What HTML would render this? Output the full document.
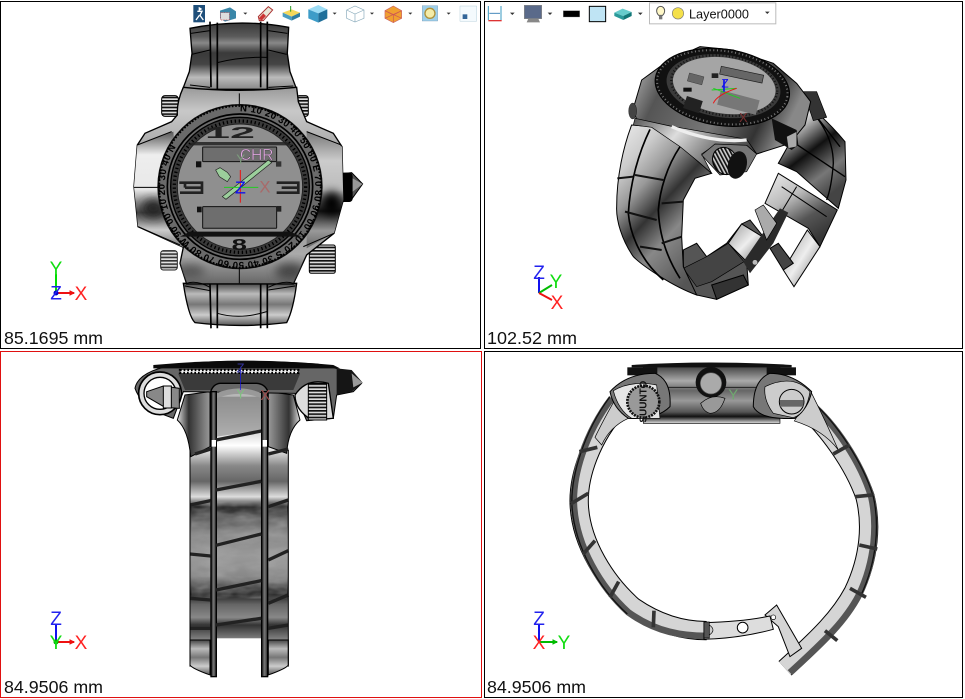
<!DOCTYPE html>
<html><head><meta charset="utf-8"><style>
html,body{margin:0;padding:0;background:#fff;width:965px;height:699px;overflow:hidden}
svg{display:block}
text{font-family:"Liberation Sans",sans-serif}
</style></head><body>
<svg width="965" height="699" viewBox="0 0 965 699" xmlns="http://www.w3.org/2000/svg">
<defs>
<clipPath id="caseClip"><path d="M160,262 Q140,305 142,345 L125,365 L45,400 L22,435 L12,560 L24,680 L160,742 L150,790 L170,852 L490,852 L530,765 L612,700 L640,600 L636,440 L610,400 L530,365 L505,305 L500,262 Q330,280 160,262 Z"/></clipPath>
<linearGradient id="topBand" x1="0" x2="0" y1="0" y2="1"><stop offset="0" stop-color="#3a3a3a"/><stop offset=".2" stop-color="#5a5a5a"/><stop offset=".3" stop-color="#888"/><stop offset=".45" stop-color="#3a3a3a"/><stop offset=".62" stop-color="#444"/><stop offset=".82" stop-color="#bbb"/><stop offset="1" stop-color="#888"/></linearGradient>
<linearGradient id="botBand" x1="0" x2="0" y1="0" y2="1"><stop offset="0" stop-color="#444"/><stop offset=".25" stop-color="#bbb"/><stop offset=".5" stop-color="#777"/><stop offset=".75" stop-color="#ccc"/><stop offset="1" stop-color="#555"/></linearGradient>
<linearGradient id="caseV" x1="0" x2="0" y1="0" y2="1"><stop offset="0" stop-color="#999"/><stop offset=".12" stop-color="#c8c8c8"/><stop offset=".5" stop-color="#888"/><stop offset=".85" stop-color="#aaa"/><stop offset="1" stop-color="#666"/></linearGradient>
<linearGradient id="sideL" x1="0" x2="0" y1="0" y2="1"><stop offset="0" stop-color="#555"/><stop offset=".2" stop-color="#eee"/><stop offset=".5" stop-color="#e8e8e8"/><stop offset=".7" stop-color="#444"/><stop offset=".85" stop-color="#ccc"/><stop offset="1" stop-color="#777"/></linearGradient>
<linearGradient id="sideR" x1="0" x2="0" y1="0" y2="1"><stop offset="0" stop-color="#777"/><stop offset=".25" stop-color="#ccc"/><stop offset=".5" stop-color="#bbb"/><stop offset=".68" stop-color="#111"/><stop offset=".85" stop-color="#999"/><stop offset="1" stop-color="#666"/></linearGradient>
<linearGradient id="v3" x1="0" x2="0" y1="0" y2="1">
<stop offset="0" stop-color="#777"/><stop offset=".08" stop-color="#aaa"/><stop offset=".19" stop-color="#fff"/><stop offset=".27" stop-color="#888"/><stop offset=".33" stop-color="#666"/><stop offset=".39" stop-color="#ddd"/><stop offset=".43" stop-color="#222"/><stop offset=".47" stop-color="#555"/><stop offset=".54" stop-color="#888"/><stop offset=".62" stop-color="#999"/><stop offset=".7" stop-color="#888"/><stop offset=".77" stop-color="#222"/><stop offset=".81" stop-color="#666"/><stop offset=".86" stop-color="#888"/><stop offset=".89" stop-color="#333"/><stop offset=".95" stop-color="#888"/><stop offset="1" stop-color="#ccc"/></linearGradient>
<linearGradient id="rail" x1="0" x2="1" y1="0" y2="0"><stop offset="0" stop-color="#222"/><stop offset=".5" stop-color="#777"/><stop offset="1" stop-color="#222"/></linearGradient>
<linearGradient id="flareL" x1="0" x2="1" y1="0" y2="0"><stop offset="0" stop-color="#ddd"/><stop offset=".35" stop-color="#333"/><stop offset="1" stop-color="#999"/></linearGradient>
<linearGradient id="flareR" x1="1" x2="0" y1="0" y2="0"><stop offset="0" stop-color="#ddd"/><stop offset=".35" stop-color="#333"/><stop offset="1" stop-color="#999"/></linearGradient>
<linearGradient id="head4" x1="0" x2="0" y1="0" y2="1"><stop offset="0" stop-color="#444"/><stop offset=".25" stop-color="#aaa"/><stop offset=".42" stop-color="#666"/><stop offset=".6" stop-color="#999"/><stop offset=".8" stop-color="#555"/><stop offset=".88" stop-color="#111"/><stop offset="1" stop-color="#ddd"/></linearGradient>
<linearGradient id="b2a" x1="0" x2="1" y1="0" y2=".3"><stop offset="0" stop-color="#ccc"/><stop offset=".25" stop-color="#555"/><stop offset=".6" stop-color="#777"/><stop offset=".85" stop-color="#333"/><stop offset="1" stop-color="#888"/></linearGradient>
<linearGradient id="lug2" x1="0" x2="1" y1="0" y2=".4"><stop offset="0" stop-color="#555"/><stop offset=".4" stop-color="#ddd"/><stop offset=".7" stop-color="#888"/><stop offset="1" stop-color="#444"/></linearGradient>
<linearGradient id="b2b" x1="0" x2=".6" y1="0" y2="1"><stop offset="0" stop-color="#eee"/><stop offset=".22" stop-color="#ccc"/><stop offset=".38" stop-color="#999"/><stop offset=".55" stop-color="#333"/><stop offset=".72" stop-color="#888"/><stop offset="1" stop-color="#555"/></linearGradient>
<linearGradient id="b2d" x1="0" x2=".5" y1="0" y2="1"><stop offset="0" stop-color="#555"/><stop offset=".25" stop-color="#ddd"/><stop offset=".55" stop-color="#111"/><stop offset=".8" stop-color="#777"/><stop offset="1" stop-color="#444"/></linearGradient>
<linearGradient id="b2e" x1="0" x2=".6" y1="0" y2="1"><stop offset="0" stop-color="#eee"/><stop offset=".4" stop-color="#bbb"/><stop offset=".7" stop-color="#555"/><stop offset="1" stop-color="#333"/></linearGradient>
<linearGradient id="b2f" x1="0" x2="1" y1="0" y2="1"><stop offset="0" stop-color="#999"/><stop offset=".5" stop-color="#eee"/><stop offset="1" stop-color="#666"/></linearGradient>
<pattern id="knurl" width="10" height="10" patternUnits="userSpaceOnUse"><rect width="10" height="10" fill="#ddd"/><rect width="10" height="5" fill="#111"/></pattern>
<pattern id="knurlV" width="10" height="10" patternUnits="userSpaceOnUse"><rect width="10" height="10" fill="#ccc"/><rect width="5" height="10" fill="#111"/></pattern>
<filter id="marble" x="0" y="0" width="100%" height="100%"><feTurbulence type="fractalNoise" baseFrequency=".012 .03" numOctaves="3" seed="4"/><feColorMatrix values="0 0 0 0 .4  0 0 0 0 .4  0 0 0 0 .4  1.6 0 0 0 -.5"/></filter>
<filter id="bl" x="-50%" y="-50%" width="200%" height="200%"><feGaussianBlur stdDeviation="14"/></filter>
<path id="bz" d="M330,334 a226,226 0 1 1 -.1,0"/>
</defs>

<rect width="965" height="699" fill="#fff"/>

<!-- VIEW 1 : FRONT -->
<g transform="translate(130,0) scale(.3333)">
 <rect x="95" y="287" width="50" height="62" rx="10" fill="url(#knurl)" stroke="#000" stroke-width="3"/>
 <rect x="500" y="287" width="35" height="62" rx="8" fill="url(#knurl)" stroke="#000" stroke-width="3"/>
 <rect x="92" y="752" width="50" height="58" rx="8" fill="url(#knurl)" stroke="#000" stroke-width="3" opacity=".85"/>
 <rect x="538" y="735" width="78" height="85" rx="6" fill="url(#knurl)" stroke="#000" stroke-width="3"/>
 <path d="M572,560 L625,522 L665,518 L698,552 L665,598 L625,605 Z" fill="#555" stroke="#000" stroke-width="3"/>
 <rect x="622" y="518" width="46" height="88" rx="10" fill="#000"/>
 <path d="M668,535 L698,552 L668,575 Z" fill="#999"/>
 <path d="M575,560 L622,535 L622,585 Z" fill="#bbb" stroke="#000" stroke-width="2"/>
 <path d="M180,85 Q330,55 476,82 L472,160 L480,215 L500,268 L158,268 L178,215 L186,160 Z" fill="url(#topBand)" stroke="#000" stroke-width="4"/>
 <path d="M262,68 L262,268 M412,65 L412,268 M240,65 L243,262 M392,65 L392,262" stroke="#000" stroke-width="5" fill="none"/>
 <path d="M183,100 L240,92 M415,92 L472,100 M185,163 L240,150 M415,150 L470,163 M262,188 Q330,170 410,172 M180,255 L240,262 M415,262 L490,258" stroke="#000" stroke-width="3" fill="none"/>
 <path d="M160,850 Q175,950 195,968 Q330,985 470,968 Q490,930 500,850 Z" fill="url(#botBand)" stroke="#000" stroke-width="4"/>
 <path d="M262,850 L262,985 M412,850 L412,985 M240,852 L243,985 M392,850 L392,985" stroke="#000" stroke-width="5" fill="none"/>
 <path d="M165,858 L240,872 M415,870 L495,858 M262,940 Q330,960 410,935" stroke="#000" stroke-width="3" fill="none"/>
 <path d="M160,262 Q140,305 142,345 L125,365 L45,400 L22,435 L12,560 L24,680 L160,742 L150,790 L170,852 L490,852 L530,765 L612,700 L640,600 L636,440 L610,400 L530,365 L505,305 L500,262 Q330,280 160,262 Z" fill="url(#caseV)" stroke="#000" stroke-width="4"/>
 <path d="M22,435 L12,560 L24,680 L160,742 L130,395 Z" fill="url(#sideL)"/>
 <path d="M636,440 L640,600 L612,700 L530,745 L530,395 Z" fill="url(#sideR)"/>
 <g clip-path="url(#caseClip)">
  <ellipse cx="70" cy="625" rx="35" ry="28" fill="#222" filter="url(#bl)"/>
  <ellipse cx="605" cy="610" rx="30" ry="35" fill="#000" filter="url(#bl)"/>
  <ellipse cx="180" cy="815" rx="45" ry="20" fill="#555" filter="url(#bl)"/>
  <ellipse cx="480" cy="815" rx="45" ry="25" fill="#444" filter="url(#bl)"/>
 </g>
 <path d="M22,435 L125,395 M530,395 L634,435 M24,680 L150,735 M520,740 L612,700 M328,280 L328,320 M328,800 L328,850 M12,562 L85,562 M170,850 Q200,840 240,862 M415,862 Q460,840 490,850" stroke="#000" stroke-width="3" fill="none"/>
 <circle cx="330" cy="560" r="248" fill="#111"/>
 <circle cx="330" cy="560" r="243" fill="#6a6a6a"/>
 <circle cx="330" cy="560" r="243" fill="none" stroke="#000" stroke-width="7" stroke-dasharray="5 5"/>
 <text font-size="29" font-weight="bold" fill="#000" letter-spacing="1"><textPath href="#bz">N 10 20 30 40 50 60 E 70 80 90 00 10 20 S 30 40 50 60 70 80 W 90 00 10 20 30 40 N</textPath></text>
 <circle cx="330" cy="560" r="218" fill="none" stroke="#000" stroke-width="5"/>
 <circle cx="330" cy="560" r="208" fill="#3a3a3a" stroke="#000" stroke-width="4"/>
 <circle cx="330" cy="560" r="197" fill="none" stroke="#000" stroke-width="10" stroke-dasharray="4 8"/>
 <circle cx="330" cy="560" r="188" fill="#8f8f8f" stroke="#222" stroke-width="3"/>
 <rect x="218" y="441" width="222" height="44" rx="2" fill="#6e6e6e" stroke="#111" stroke-width="3"/>
 <rect x="218" y="620" width="222" height="65" rx="2" fill="#6e6e6e" stroke="#111" stroke-width="3"/>
 <path d="M190,426 L470,426 L490,436 L172,436 Z" fill="#222" opacity=".85"/>
 <path d="M180,695 L480,695 L515,710 L150,710 Z" fill="#111"/>
 <text x="300" y="414" font-size="46" font-weight="bold" fill="#222" text-anchor="middle" textLength="150" lengthAdjust="spacingAndGlyphs">12</text>
 <text x="328" y="750" font-size="46" font-weight="bold" fill="#111" text-anchor="middle" textLength="46" lengthAdjust="spacingAndGlyphs">8</text>
 <path d="M148,548 L216,548 L216,578 L150,578 M216,563 L165,563 M165,548 L165,563" stroke="#222" stroke-width="8" fill="none"/>
 <path d="M440,548 L505,548 L505,578 L440,578 M505,563 L455,563" stroke="#222" stroke-width="8" fill="none"/>
 <rect x="198" y="484" width="16" height="18" fill="#111"/><rect x="438" y="484" width="16" height="16" fill="#333"/>
 <rect x="201" y="620" width="14" height="17" fill="#111"/><rect x="440" y="618" width="14" height="17" fill="#222"/>
 <path d="M277,590 L415,480 L425,488 L288,598 Z" fill="#9ccf9c" stroke="#222" stroke-width="2"/>
 <path d="M257,510 L270,503 L292,517 L302,530 L292,545 L268,530 Z" fill="#9ccf9c" stroke="#222" stroke-width="2"/>
 <text x="380" y="480" font-size="48" fill="#e0a8e0" stroke="#333" stroke-width=".8" text-anchor="middle" textLength="100" lengthAdjust="spacingAndGlyphs">CHR</text>
 <path d="M331,510 V608" stroke="#e11" stroke-width="3"/>
 <path d="M282,562 H385" stroke="#2c2" stroke-width="3"/>
 <text x="332" y="490" font-size="40" fill="#7d9c7d" text-anchor="middle">Y</text>
 <text x="405" y="578" font-size="50" fill="#a86a6a" text-anchor="middle">X</text>
 <text x="331" y="580" font-size="54" fill="#11e" text-anchor="middle">Z</text>
</g>

<!-- VIEW 2 : PERSPECTIVE -->
<g transform="translate(600,30) scale(.3333)">
 <path d="M625,225 Q690,280 735,335 L738,450 L715,535 L590,425 L535,400 L580,320 Z" fill="url(#b2d)" stroke="#000" stroke-width="3"/>
 <path d="M640,250 Q700,320 700,400 Q695,470 680,510 M585,340 L735,440 M650,260 L720,350" stroke="#000" stroke-width="4" fill="none"/>
 <path d="M535,430 L712,540 L660,650 L625,595 L495,520 Z" fill="url(#b2e)" stroke="#000" stroke-width="3"/>
 <path d="M545,470 L680,560 M590,470 L545,545" stroke="#000" stroke-width="3" fill="none"/>
 <path d="M550,720 L622,600 L660,650 L582,770 Z" fill="url(#b2f)" stroke="#000" stroke-width="3"/>
 <path d="M610,185 L650,185 L680,262 L640,272 Z" fill="#333" stroke="#000" stroke-width="2"/>
 <path d="M250,660 L290,640 L320,680 L380,640 L425,582 L450,570 L490,620 L440,695 L445,765 L350,808 L290,795 L250,730 Z" fill="#555" stroke="#000" stroke-width="3"/>
 <path d="M385,640 L425,582 L495,625 L440,695 Z" fill="url(#b2f)" stroke="#000" stroke-width="3"/>
 <path d="M250,715 L320,680 L385,640 L432,695 L335,755 L290,770 Z" fill="#444" stroke="#000" stroke-width="2"/>
 <path d="M335,765 L430,735 L445,765 L350,808 Z" fill="#333" stroke="#000" stroke-width="3"/>
 <path d="M430,695 L540,535 L565,548 L520,640 L450,730 Z" fill="#2a2a2a"/>
 <path d="M465,540 L490,525 L530,580 L500,630 Z" fill="#aaa" stroke="#000" stroke-width="2"/>
 <path d="M510,655 L535,640 L580,700 L550,720 Z" fill="#444" stroke="#000" stroke-width="3"/>
 <circle cx="465" cy="697" r="8" fill="#bbb" stroke="#000"/>
 <path d="M95,285 L155,290 L245,350 L295,395 L335,430 L285,445 L250,510 L245,620 L250,710 L290,795 C220,770 130,710 100,680 C65,630 48,570 50,530 C50,440 70,350 95,285 Z" fill="url(#b2b)" stroke="#000" stroke-width="3"/>
 <path d="M150,298 C115,370 90,460 85,550 C90,610 120,690 190,750 M240,350 C200,410 180,480 175,540 C178,620 205,690 240,745" stroke="#000" stroke-width="5" fill="none"/>
 <path d="M105,435 L190,450 M52,445 L100,440 M75,545 L170,570 M185,520 L250,515 M185,640 L245,620 M120,650 L185,660" stroke="#111" stroke-width="6" fill="none"/>
 <path d="M100,235 L125,150 L200,95 L300,50 L400,60 L520,100 L590,160 L632,215 L615,285 L570,340 L470,372 L440,330 L210,290 L110,270 Z" fill="url(#b2a)" stroke="#000" stroke-width="3"/>
 <ellipse cx="98" cy="243" rx="12" ry="24" fill="#444" stroke="#000"/>
 <path d="M105,265 L210,288 L440,328 L470,372 L440,346 L345,345 L305,372 L335,430 L295,395 L240,350 L155,292 L100,285 Z" fill="url(#lug2)" stroke="#000" stroke-width="2"/>
 <path d="M215,290 Q330,340 440,330" stroke="#eee" stroke-width="10" fill="none"/>
 <g transform="rotate(8 367 172)">
  <ellipse cx="367" cy="172" rx="203" ry="115" fill="#111" stroke="#000" stroke-width="3"/>
  <ellipse cx="367" cy="172" rx="197" ry="109" fill="none" stroke="#777" stroke-width="6" stroke-dasharray="3 8"/>
  <ellipse cx="370" cy="168" rx="172" ry="94" fill="#3a3a3a"/>
  <ellipse cx="372" cy="166" rx="155" ry="84" fill="#a5a5a5"/>
  <ellipse cx="372" cy="166" rx="160" ry="89" fill="none" stroke="#111" stroke-width="7" stroke-dasharray="3 7"/>
 </g>
 <rect x="360" y="122" width="130" height="24" fill="#666" stroke="#222" stroke-width="2" transform="rotate(12 425 134)"/>
 <rect x="265" y="135" width="45" height="25" fill="#666" stroke="#222" transform="rotate(15 290 145)"/>
 <rect x="335" y="130" width="20" height="14" fill="#222"/>
 <rect x="255" y="205" width="50" height="38" fill="#222" transform="rotate(18 280 220)"/>
 <rect x="355" y="195" width="120" height="45" fill="#777" transform="rotate(15 415 218)"/>
 <rect x="250" y="173" width="25" height="12" fill="#111"/>
 <path d="M335,180 L410,175 M340,175 L420,205" stroke="#2c2" stroke-width="3"/>
 <path d="M372,185 V150" stroke="#11e" stroke-width="5"/>
 <path d="M340,220 Q350,195 410,175" stroke="#e11" stroke-width="3" fill="none"/>
 <text x="375" y="172" font-size="36" fill="#11e" text-anchor="middle">Z</text>
 <text x="430" y="276" font-size="38" fill="#7a3030" text-anchor="middle">X</text>
 <path d="M305,375 L345,342 L440,346 L470,372 L440,425 L360,435 Z" fill="#777" stroke="#000" stroke-width="2"/>
 <ellipse cx="375" cy="393" rx="36" ry="42" fill="url(#knurlV)" stroke="#000" stroke-width="3" transform="rotate(-28 375 393)"/>
 <ellipse cx="412" cy="405" rx="28" ry="42" fill="#111" transform="rotate(15 412 405)"/>
 <path d="M515,265 L590,300 L595,345 L575,360 L525,330 Z" fill="#111"/>
 <path d="M560,320 L590,305 L590,350 L565,355 Z" fill="#aaa" stroke="#000"/>
</g>

<!-- VIEW 3 : BOTTOM -->
<g transform="translate(120,350) scale(.3333)">
 <rect x="210" y="140" width="295" height="770" fill="url(#v3)"/>
 <rect x="215" y="455" width="285" height="290" filter="url(#marble)" opacity=".7"/>
 <path d="M210,870 L210,945 Q215,955 270,975 L270,870 Z" fill="url(#botBand)" stroke="#000" stroke-width="3"/>
 <path d="M505,870 L505,945 Q500,955 445,975 L445,870 Z" fill="url(#botBand)" stroke="#000" stroke-width="3"/>
 <rect x="288" y="865" width="136" height="125" fill="#fff"/>
 <path d="M172,210 L195,135 L270,125 L270,290 L212,320 Q205,240 172,210 Z" fill="url(#flareL)" stroke="#000" stroke-width="3"/>
 <path d="M540,210 L520,135 L445,125 L445,290 L500,310 Q505,240 540,210 Z" fill="url(#flareR)" stroke="#000" stroke-width="3"/>
 <path d="M45,115 Q55,60 180,42 Q360,25 590,42 Q700,60 725,100 L700,125 L650,135 L640,205 L560,212 L525,130 L190,125 L160,205 L120,190 Q60,160 45,115 Z" fill="#666" stroke="#000" stroke-width="3"/>
 <path d="M100,45 Q360,20 640,45 L660,55 L100,55 Z" fill="#0a0a0a"/>
 <rect x="180" y="58" width="355" height="13" fill="#eee" stroke="#000" stroke-width="2"/>
 <rect x="180" y="60" width="355" height="9" fill="none" stroke="#000" stroke-width="7" stroke-dasharray="5 6"/>
 <path d="M175,72 L540,72 L520,120 L195,120 Z" fill="#3a3a3a"/>
 <circle cx="120" cy="130" r="64" fill="#ddd" stroke="#000" stroke-width="5"/>
 <circle cx="120" cy="130" r="48" fill="#fff" stroke="#000" stroke-width="4"/>
 <path d="M80,125 L130,108 L178,115 L178,175 L135,172 L80,140 Z" fill="#888" stroke="#000" stroke-width="3"/>
 <rect x="130" y="108" width="24" height="66" fill="#ddd" stroke="#000" stroke-width="3"/>
 <path d="M525,135 Q560,82 625,100 L640,205 L575,210 Q525,180 525,135 Z" fill="#ddd" stroke="#000" stroke-width="4"/>
 <rect x="565" y="100" width="55" height="110" fill="url(#knurl)" stroke="#000" stroke-width="3"/>
 <path d="M650,55 L695,60 L728,98 L695,125 L650,135 Z" fill="#151515"/>
 <path d="M695,70 L728,98 L700,112 Z" fill="#999"/>
 <path d="M290,140 Q360,105 425,140 L425,240 L290,260 Z" fill="#999" opacity=".7"/>
 <path d="M272,125 Q280,102 300,100 L410,100 Q435,102 444,125" fill="#666" stroke="#000" stroke-width="4"/>
 <path d="M288,130 Q360,100 425,130 L425,145 Q360,118 288,145 Z" fill="#999"/>
 <g stroke="#000" stroke-width="4">
  <rect x="273" y="125" width="16" height="855" fill="url(#rail)"/>
  <rect x="425" y="125" width="18" height="855" fill="url(#rail)"/>
 </g>
 <path d="M288,270 L424,243 M288,420 L424,394 M288,586 L424,552 M288,720 L424,692 M288,825 L424,805 M225,312 L272,297 M445,312 L505,297 M210,465 L272,452 M445,470 L505,450 M210,612 L272,618 M445,630 L505,602 M210,745 L272,750 M445,760 L505,735 M210,835 L272,835 M445,835 L505,825" stroke="#222" stroke-width="10" fill="none"/>
 <path d="M210,300 V950 M505,300 V950" stroke="#000" stroke-width="3" fill="none"/>
 <rect x="275" y="270" width="13" height="20" fill="#fff"/><rect x="428" y="270" width="13" height="20" fill="#fff"/>
 <path d="M362,50 V120" stroke="#11e" stroke-width="2"/>
 <text x="362" y="68" font-size="38" fill="#33339a" text-anchor="middle">Z</text>
 <text x="362" y="146" font-size="38" fill="#7fc07f" text-anchor="middle">Y</text>
 <text x="436" y="150" font-size="44" fill="#9a4a4a" text-anchor="middle">X</text>
</g>

<!-- VIEW 4 : SIDE -->
<g transform="translate(560,350) scale(.3333)" fill="none" stroke-linecap="butt">
 <path d="M178,170 C95,260 52,380 58,470 C65,580 135,695 220,770 C300,825 375,842 440,842" stroke="#000" stroke-width="58"/>
 <path d="M178,170 C95,260 52,380 58,470 C65,580 135,695 220,770 C300,825 375,842 440,842" stroke="#d5d5d5" stroke-width="52"/>
 <path d="M155,145 C75,250 36,380 42,470 C50,590 122,712 205,787 C290,848 370,858 440,858" stroke="#555" stroke-width="20"/>
 <path d="M150,140 C72,245 31,380 36,470 C45,595 118,716 202,792" stroke="#111" stroke-width="4"/>
 <path d="M730,170 C800,230 880,340 915,440 C935,520 930,620 880,725 C840,800 780,860 675,955" stroke="#000" stroke-width="58"/>
 <path d="M730,170 C800,230 880,340 915,440 C935,520 930,620 880,725 C840,800 780,860 675,955" stroke="#d5d5d5" stroke-width="52"/>
 <path d="M752,160 C825,222 902,335 934,440 C952,520 947,630 897,735 C857,812 795,872 690,968" stroke="#555" stroke-width="20"/>
 <path d="M757,155 C830,220 908,335 940,440 C958,520 953,630 902,738" stroke="#111" stroke-width="4"/>
 <g fill="#e0e0e0" stroke="#000">
  <path d="M105,262 Q130,210 170,140 L205,205 Q150,230 125,285 Z" fill="#ccc" stroke-width="2"/>
  <path d="M703,213 L755,130 Q800,220 835,300 Q790,240 703,213 Z" fill="#ccc" stroke-width="2"/>
  <path d="M615,795 L650,765 L725,895 L690,920 L655,830 Z" fill="#d5d5d5" stroke-width="3"/>
  <path d="M432,818 Q550,815 630,798 L640,838 Q540,865 432,868 Z" fill="#ddd" stroke-width="3"/>
  <circle cx="548" cy="833" r="16" fill="#fff" stroke-width="3"/>
  <circle cx="640" cy="802" r="7" fill="#fff" stroke-width="2"/>
  <rect x="432" y="816" width="16" height="48" fill="#555" stroke-width="2"/>
  <path d="M448,825 Q470,840 448,855 Z" fill="#ccc" stroke-width="2"/>
 </g>
 <path d="M58,305 L112,292 M32,462 L85,430 M70,612 L105,572 M150,742 L176,695 M280,832 L282,782 M820,312 L868,285 M885,440 L938,435 M898,585 L952,597 M870,715 L918,742 M795,842 L832,872" stroke="#333" stroke-width="11"/>
 <rect x="250" y="50" width="410" height="170" fill="url(#head4)" stroke="#000" stroke-width="2"/>
 <path d="M215,45 Q450,30 695,45 L695,52 L215,52 Z" fill="#111"/>
 <rect x="202" y="52" width="90" height="24" fill="#111"/><rect x="620" y="52" width="88" height="24" fill="#111"/>
 <path d="M250,112 H660" stroke="#222" stroke-width="3"/>
 <path d="M150,125 Q200,70 285,70 Q335,90 330,170 Q290,210 205,205 Q160,175 150,125 Z" fill="#777" stroke="#000" stroke-width="3"/>
 <path d="M160,122 Q215,90 290,105 L300,205 L215,205 Q175,180 160,122 Z" fill="#e5e5e5" stroke="#000" stroke-width="2"/>
 <circle cx="250" cy="155" r="48" fill="#999" stroke="#111" stroke-width="8" stroke-dasharray="6 3"/>
 <text x="250" y="164" font-size="30" font-weight="bold" fill="#111" stroke="none" text-anchor="middle" transform="rotate(-90 250 155)">SUUNTO</text>
 <path d="M755,125 Q700,70 630,70 Q580,90 580,170 Q600,210 705,205 Q745,175 755,125 Z" fill="#777" stroke="#000" stroke-width="3"/>
 <path d="M615,110 Q700,70 750,125 Q740,190 700,203 L640,190 Q610,150 615,110 Z" fill="#ccc" stroke="#000" stroke-width="2"/>
 <circle cx="695" cy="155" r="37" fill="#ccc" stroke="#000" stroke-width="3"/>
 <rect x="660" y="150" width="70" height="20" fill="#666"/>
 <circle cx="453" cy="97" r="46" fill="#111"/>
 <circle cx="453" cy="100" r="32" fill="#aaa" stroke="#555" stroke-width="2"/>
 <path d="M422,160 Q455,130 495,145 Q480,190 450,190 Q430,185 422,160 Z" fill="#999" stroke="#000" stroke-width="2"/>
 <text x="520" y="148" font-size="44" fill="#6fa86f" stroke="none" text-anchor="middle">Y</text>
</g>

<!-- axis triads -->
<g font-size="19">
 <g>
  <path d="M56,293 V274" stroke="#0d0" stroke-width="2"/><path d="M56,293 H74" stroke="#e11" stroke-width="2"/>
  <path d="M70,291 L74,293 L70,295 Z" fill="#e11" stroke="#e11"/><circle cx="56" cy="293" r="2.5" fill="#00c"/>
  <text x="56" y="275" fill="#1d1" text-anchor="middle">Y</text>
  <text x="56" y="299.500" fill="#22e" text-anchor="middle">Z</text>
  <text x="81" y="300" fill="#f22" text-anchor="middle">X</text>
 </g>
 <g>
  <path d="M539,293 V277" stroke="#11e" stroke-width="2"/><path d="M539,293 L552,285" stroke="#0b0" stroke-width="2"/><path d="M539,293 L552,300" stroke="#e11" stroke-width="2"/>
  <text x="539" y="279" fill="#22e" text-anchor="middle">Z</text>
  <text x="556" y="288" fill="#1d1" text-anchor="middle">Y</text>
  <text x="557" y="309" fill="#f22" text-anchor="middle">X</text>
 </g>
 <g>
  <path d="M56,642 V624" stroke="#11e" stroke-width="2"/><path d="M56,642 H74" stroke="#e11" stroke-width="2"/>
  <path d="M70,640 L74,642 L70,644 Z" fill="#e11" stroke="#e11"/><circle cx="56" cy="642" r="2.500" fill="#0a0"/>
  <text x="56" y="625" fill="#22e" text-anchor="middle">Z</text>
  <text x="56" y="649" fill="#1d1" text-anchor="middle">Y</text>
  <text x="81" y="649" fill="#f22" text-anchor="middle">X</text>
 </g>
 <g>
  <path d="M539,642 V624" stroke="#11e" stroke-width="2"/><path d="M539,642 H557" stroke="#0b0" stroke-width="2"/>
  <path d="M553,640 L557,642 L553,644 Z" fill="#0b0" stroke="#0b0"/>
  <text x="539" y="625" fill="#22e" text-anchor="middle">Z</text>
  <text x="539" y="649" fill="#f22" text-anchor="middle">X</text>
  <text x="564" y="649" fill="#1d1" text-anchor="middle">Y</text>
 </g>
</g>

<!-- labels -->
<g font-size="17.500" fill="#111">
 <text x="4" y="344" textLength="99" lengthAdjust="spacingAndGlyphs">85.1695 mm</text>
 <text x="487" y="344" textLength="90" lengthAdjust="spacingAndGlyphs">102.52 mm</text>
 <text x="4" y="693" textLength="99" lengthAdjust="spacingAndGlyphs">84.9506 mm</text>
 <text x="487" y="693" textLength="99" lengthAdjust="spacingAndGlyphs">84.9506 mm</text>
</g>

<!-- panel borders -->
<rect x=".5" y="1.500" width="480" height="347" fill="none" stroke="#000"/>
<rect x="484.500" y="1.500" width="478" height="347" fill="none" stroke="#000"/>
<rect x="484.500" y="351.500" width="478" height="346" fill="none" stroke="#000"/>
<rect x=".5" y="351.500" width="481" height="346" fill="none" stroke="#e01010"/>

<!-- toolbar 1 -->
<g transform="translate(180,0) scale(.3333)">
 <rect x="40" y="15" width="35" height="52" fill="#1f4f7a"/>
 <path d="M58,24 l5,3 l-5,3 z M52,34 L66,34 L60,46 L70,60 M58,46 L48,60" stroke="#fff" stroke-width="4" fill="none"/>
 <path d="M120,32 L150,22 L168,34 L168,55 L135,65 L120,55 Z" fill="#3a86a8"/>
 <rect x="122" y="38" width="26" height="22" fill="#ddd" stroke="#c55" stroke-width="2" stroke-dasharray="3 2"/>
 <path d="M190,38 h12 l-6,6 z M458,38 h12 l-6,6 z M570,38 h12 l-6,6 z M685,38 h12 l-6,6 z M800,38 h12 l-6,6 z" fill="#333"/>
 <path d="M235,50 L265,20 L278,30 L250,62 L238,62 Z" fill="#e8e8d8" stroke="#a33" stroke-width="3"/>
 <path d="M236,55 L250,40 L258,48 L245,62 Z" fill="#c33"/>
 <path d="M308,38 L335,28 L360,38 L335,50 Z" fill="#f5d85a"/><path d="M308,38 L335,50 V62 L308,50 Z" fill="#4a9cc0"/><path d="M360,38 L335,50 V62 L360,50 Z" fill="#2f7da0"/>
 <path d="M332,18 V35" stroke="#2a9a2a" stroke-width="3"/>
 <path d="M385,28 L415,15 L442,28 L415,40 Z" fill="#9cdcf5"/><path d="M385,28 L415,40 V68 L385,55 Z" fill="#3d9cc8"/><path d="M442,28 L415,40 V68 L442,55 Z" fill="#1f6f9a"/>
 <path d="M500,30 L525,18 L552,30 L552,55 L525,66 L500,55 Z M500,30 L525,42 L552,30 M525,42 V66" fill="#fff" stroke="#8ab" stroke-width="2"/>
 <path d="M615,32 L640,18 L665,32 L665,55 L640,68 L615,55 Z" fill="#f0a030" stroke="#c66" stroke-width="2"/><path d="M615,32 L640,45 L665,32 M640,45 V68 M615,55 L665,32 M615,32 L665,55" stroke="#c55" stroke-width="2" fill="none"/>
 <rect x="727" y="17" width="46" height="46" fill="#9fd0ea" stroke="#68a" stroke-width="1"/>
 <circle cx="750" cy="40" r="15" fill="#f4eca8" stroke="#b0923a" stroke-width="4"/>
 <rect x="840" y="18" width="50" height="46" fill="#f4fafd" stroke="#9bc"/><rect x="848" y="43" width="14" height="14" fill="#369"/>
</g>

<!-- toolbar 2 -->
<g transform="translate(480,0) scale(.3333)">
 <path d="M25,18 V60 M63,18 V60" stroke="#3a9ac0" stroke-width="3"/><path d="M25,62 H65" stroke="#d33" stroke-width="4"/><path d="M28,40 H60" stroke="#48b" stroke-width="3"/>
 <path d="M90,38 h14 l-7,7 z M203,38 h14 l-7,7 z M474,38 h14 l-7,7 z" fill="#333"/>
 <rect x="133" y="16" width="52" height="40" fill="#5a6a8a" stroke="#888" stroke-width="2"/><path d="M145,56 H175 L180,67 H140 Z" fill="#888"/>
 <rect x="250" y="32" width="49" height="19" fill="#000" stroke="#888"/>
 <rect x="328" y="19" width="49" height="46" fill="#bfe4f4" stroke="#000" stroke-width="3"/>
 <path d="M403,38 L428,26 L455,36 L430,48 Z" fill="#6cc"/><path d="M403,38 L430,48 V60 L403,48 Z" fill="#2a9a9a"/><path d="M455,36 L430,48 V60 L455,48 Z" fill="#177"/>
 <rect x="508.500" y="8.500" width="379" height="63" fill="#fff" stroke="#bbb" stroke-width="3"/>
 <path d="M530,32 a12,13 0 1 1 24,0 q0,8 -6,14 h-12 q-6,-6 -6,-14 z" fill="#fff8c8" stroke="#555" stroke-width="3"/><rect x="537" y="48" width="10" height="10" fill="#777"/>
 <circle cx="594" cy="40" r="17" fill="#f4e04a" stroke="#777" stroke-width="2"/>
 <path d="M855,35 h14 l-7,7 z" fill="#333"/>
</g>
<text x="689" y="18.500" font-size="12.500" fill="#111" textLength="60" lengthAdjust="spacingAndGlyphs">Layer0000</text>
</svg>
</body></html>
